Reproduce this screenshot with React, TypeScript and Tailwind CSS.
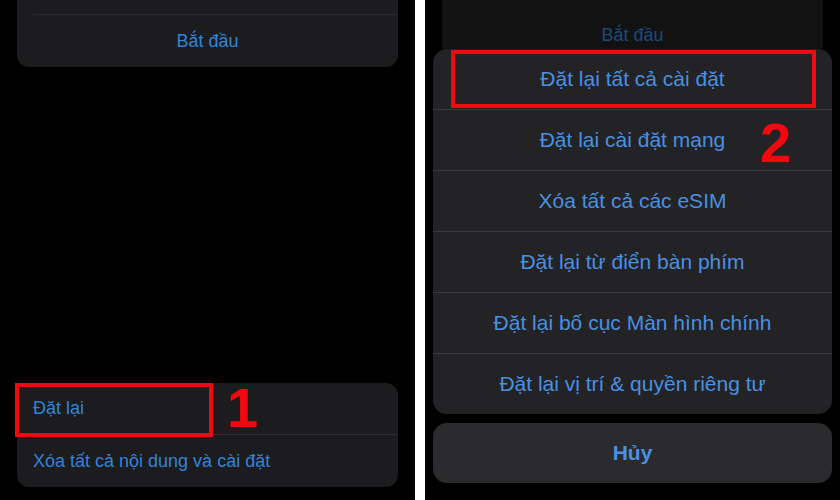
const font = { fontFamily: '"Liberation Sans", Arial, sans-serif' };

const resetOptions = [
  "Đặt lại tất cả cài đặt",
  "Đặt lại cài đặt mạng",
  "Xóa tất cả các eSIM",
  "Đặt lại từ điển bàn phím",
  "Đặt lại bố cục Màn hình chính",
  "Đặt lại vị trí & quyền riêng tư",
];

function LeftScreen() {
  return (
    <div className="flex h-full w-[415px] flex-col bg-black">
      <div className="mx-[17px] flex h-[67px] flex-col rounded-b-xl bg-[#1c1c1e]">
        <div className="h-[15px] border-b border-[#2c2c2e] ml-[16px]" />
        <div className="flex flex-1 items-center justify-center text-[18px] text-[#3383d9]">Bắt đầu</div>
      </div>
      <div className="flex-1" />
      <div className="relative mx-[17px] mb-[13px] rounded-xl bg-[#1c1c1e] text-[18px] text-[#3383d9]">
        <div className="flex h-[51px] items-center pl-[16px]">Đặt lại</div>
        <div className="ml-[17px] h-px bg-[#2e2e30]" />
        <div className="flex h-[52px] items-center pl-[16px]">Xóa tất cả nội dung và cài đặt</div>
        <div className="absolute left-[-2px] top-0 h-[54px] w-[198px] border-4 border-[#f2090f]" />
        <div className="absolute left-[210px] top-[-3px] text-[56px] font-bold leading-none text-[#f2090f]">1</div>
      </div>
    </div>
  );
}

function RightScreen() {
  return (
    <div className="flex h-full flex-1 flex-col bg-black px-[8px]">
      <div className="mx-[9px] h-[49px] bg-[#121213] pt-[21px] text-center text-[18px] leading-[28px] text-[#1d4a7a]">
        Bắt đầu
      </div>
      <div className="relative rounded-[14px] bg-[#232325] text-[21px] text-[#4a8fe0]">
        {resetOptions.map((label, i) => (
          <div key={label}>
            {i > 0 && <div className="h-px bg-[#3a3a3c]" />}
            <div className="flex h-[60px] items-center justify-center">{label}</div>
          </div>
        ))}
        <div className="absolute left-[18px] top-[1px] h-[58px] w-[365px] border-4 border-[#f2090f]" />
        <div className="absolute left-[327px] top-[66px] text-[56px] font-bold leading-none text-[#f2090f]">2</div>
      </div>
      <div className="mt-[9px] flex h-[60px] items-center justify-center rounded-[14px] bg-[#2b2b2d] text-[21px] font-bold text-[#4a8fe0]">
        Hủy
      </div>
    </div>
  );
}

export default function App() {
  return (
    <div className="flex h-[500px] w-[840px] overflow-hidden bg-black" style={font}>
      <LeftScreen />
      <div className="h-full w-[10px] bg-white" />
      <RightScreen />
    </div>
  );
}
